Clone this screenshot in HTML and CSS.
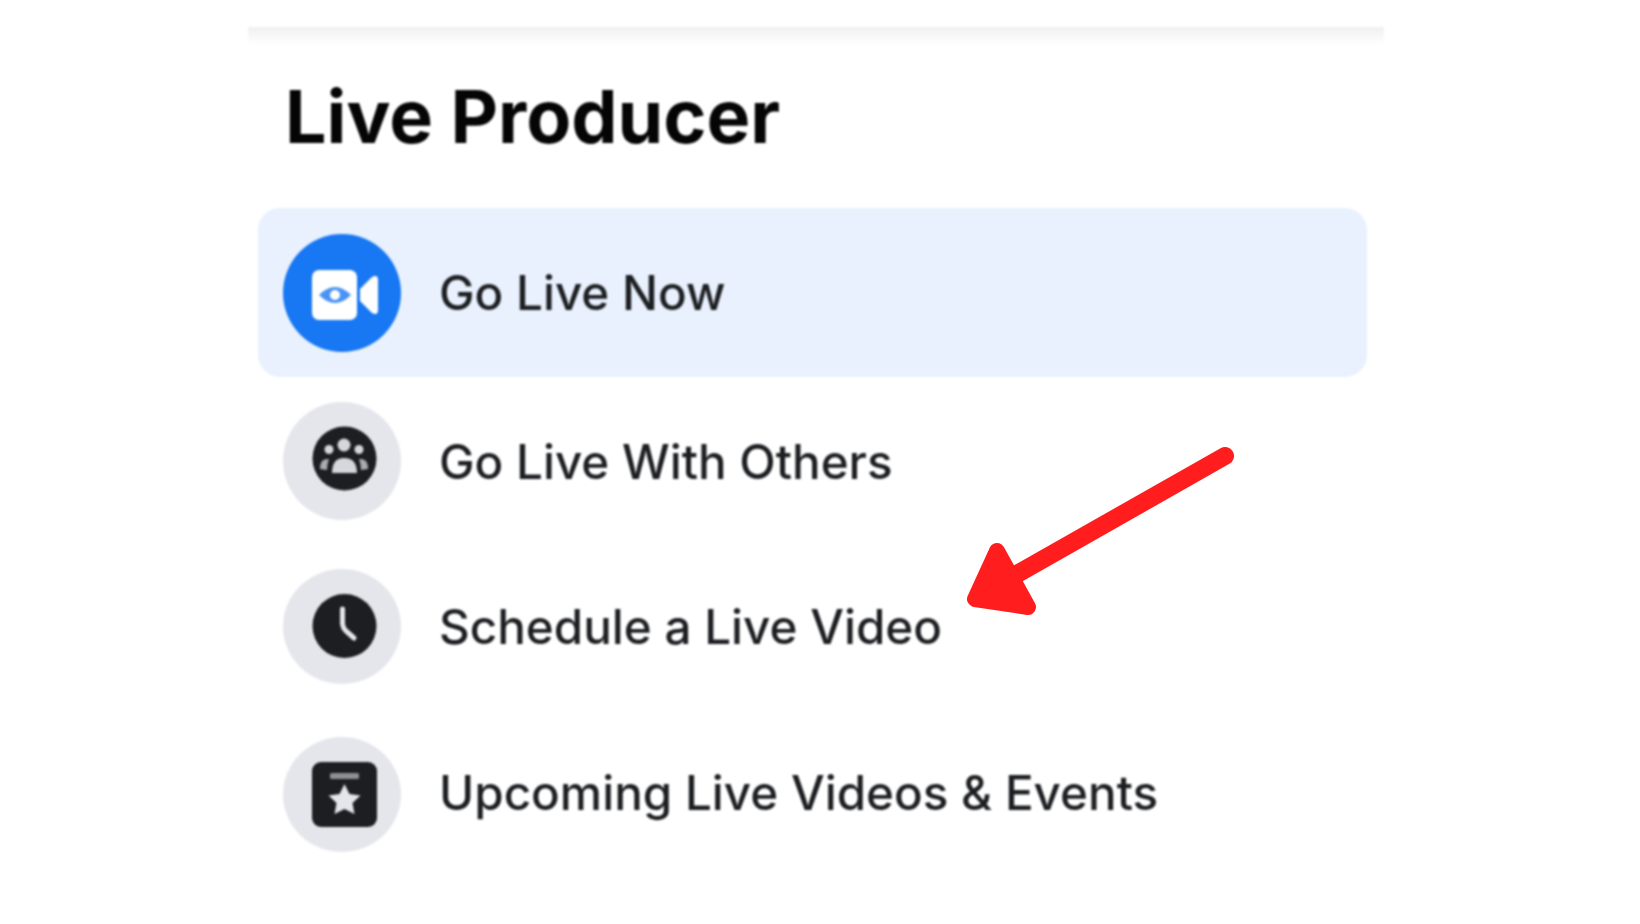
FILE: index.html
```html
<!DOCTYPE html>
<html lang="en">
<head>
  <meta charset="UTF-8">
  <meta name="viewport" content="width=device-width, initial-scale=1.0">
  <title>Live Producer</title>
  <link rel="stylesheet" href="styles.css">
</head>
<body>
  <div class="panel">
    <div class="top-shade"></div>
    <h1 class="title">Live Producer</h1>

    <div class="menu">
      <div class="row row-active">
        <div class="icon icon-blue">
          <svg viewBox="0 0 118 118" width="118" height="118">
            <rect x="29" y="36" width="45" height="50" rx="7" fill="#fff"/>
            <path d="M77 55 L89 43 Q95 40 95 46 L95 76 Q95 82 89 79 L77 67 Z" fill="#fff"/>
            <path d="M36 61 Q52 45 68 61 Q52 77 36 61 Z" fill="#4a93f5"/>
            <circle cx="52" cy="61" r="5" fill="#fff"/>
          </svg>
        </div>
        <span class="label">Go Live Now</span>
      </div>

      <div class="row">
        <div class="icon">
          <svg viewBox="0 0 118 118" width="118" height="118">
            <circle cx="61.5" cy="56.5" r="32" fill="#1c1e21"/>
            <circle cx="61" cy="43" r="6.5" fill="#d5d7dc"/>
            <circle cx="46" cy="47.5" r="4.5" fill="#d5d7dc"/>
            <circle cx="76" cy="47.5" r="4.5" fill="#d5d7dc"/>
            <path d="M49 71 Q49 56 61 56 Q74 56 74 71 Z" fill="#d5d7dc"/>
            <path d="M37 67 Q37 57 44 57 L46 57 Q44 62 44 68 Z" fill="#a9abb0"/>
            <path d="M85 67 Q85 57 78 57 L76 57 Q78 62 78 68 Z" fill="#a9abb0"/>
          </svg>
        </div>
        <span class="label">Go Live With Others</span>
      </div>

      <div class="row row-short">
        <div class="icon icon-flat">
          <svg viewBox="0 0 118 115" width="118" height="115">
            <circle cx="61.5" cy="57" r="32" fill="#1c1e21"/>
            <path d="M59.5 40 L59.5 55 Q60 59 63 62 L71 69" fill="none" stroke="#e4e6eb" stroke-width="5" stroke-linecap="round"/>
          </svg>
        </div>
        <span class="label">Schedule a Live Video</span>
      </div>

      <div class="row row-tall">
        <div class="icon icon-flat">
          <svg viewBox="0 0 118 115" width="118" height="115">
            <rect x="29" y="25" width="65" height="65" rx="9" fill="#1c1e21"/>
            <rect x="47" y="36" width="29" height="6" rx="1.5" fill="#8d8f94"/>
            <path d="M61.5 47 L66.5 57 L77.5 58.5 L69.5 66 L71.5 77 L61.5 72 L51.5 77 L53.5 66 L45.5 58.5 L56.5 57 Z" fill="#e4e6eb"/>
          </svg>
        </div>
        <span class="label label-up">Upcoming Live Videos &amp; Events</span>
      </div>
    </div>
  </div>

  <!-- red annotation arrow over the list -->
  <svg class="arrow" viewBox="0 0 1640 924" width="1640" height="924">
    <line x1="1225" y1="456" x2="1010" y2="578" stroke="#ff1d1d" stroke-width="18" stroke-linecap="round"/>
    <polygon points="997,551 975,599 1028,607" fill="#ff1d1d" stroke="#ff1d1d" stroke-width="16" stroke-linejoin="round"/>
  </svg>
</body>
</html>
```

FILE: styles.css
```css
body {
  font-family: Inter, Roboto, "Liberation Sans", sans-serif;
  background: #fff;
  margin: 0;
  height: 924px;
  overflow: hidden;
}
.panel {
  width: 1136px;
  margin-left: 248px;
  padding-top: 27px;
  filter: blur(0.9px);
}
.top-shade {
  height: 18px;
  background: linear-gradient(#f0f0f1, #fff);
}
.title {
  margin: 0;
  padding: 30px 0 0 37px;
  height: 163px;
  box-sizing: border-box;
  font-size: 73.5px;
  line-height: 84px;
  font-weight: 700;
  color: #050505;
}
.menu {
  margin-left: 10px;
  width: 1109px;
}
.row {
  display: flex;
  align-items: center;
  gap: 38px;
  height: 168px;
  padding-left: 25px;
  border-radius: 22px;
}
.row-active {
  height: 169px;
  background: #e8f1fd;
}
.row-short {
  height: 163px;
}
.row-tall {
  height: 173px;
}
.icon {
  width: 118px;
  height: 118px;
  flex-shrink: 0;
  border-radius: 50%;
  background: #e4e6eb;
}
.icon-flat {
  height: 115px;
}
.icon-blue {
  background: #1877f2;
}
.label {
  font-size: 47.6px;
  font-weight: 500;
  color: #1c1e21;
}
.label-up {
  margin-top: -5px;
}
.arrow {
  position: absolute;
  left: 0;
  top: 0;
}
```
